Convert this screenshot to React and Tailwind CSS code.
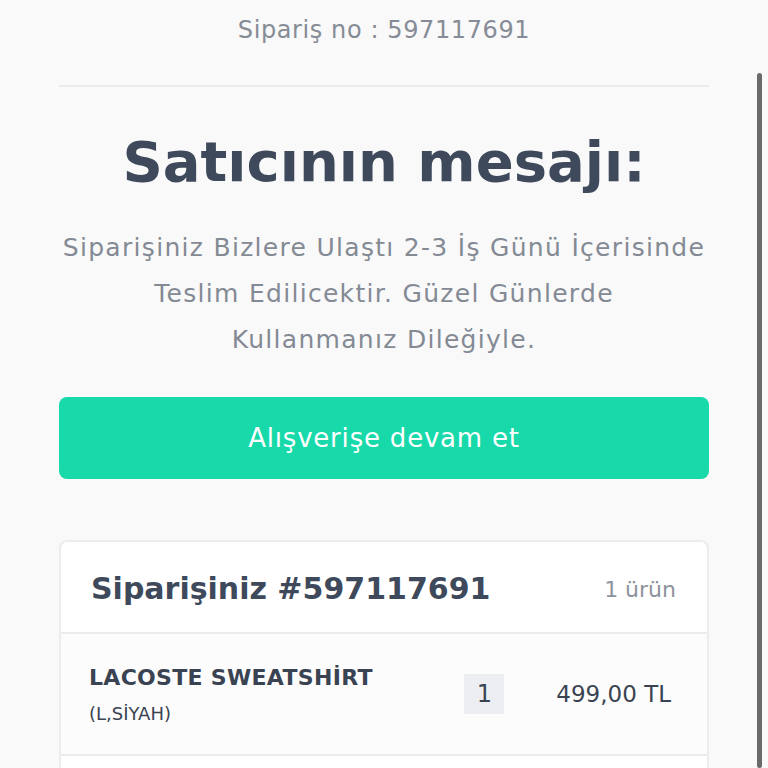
export default function App() {
  return (
    <div
      className="relative min-h-[768px] bg-[#f9f9fa] text-[#3e4a5b]"
      style={{ fontFamily: '"DejaVu Sans", "Open Sans", sans-serif' }}
    >
      <div className="mx-auto w-[650px]">
        <div className="flex h-[60px] items-center justify-center text-[24px] tracking-[0.6px] text-[#868c96]">
          Sipariş no : 597117691
        </div>
        <div className="mt-[25px] border-t-2 border-[#ececee]" />

        <h1 className="mt-[37px] text-center text-[56px] font-bold leading-[76px] text-[#3e4a5b]">
          Satıcının mesajı:
        </h1>

        <p className="mt-[25px] text-center text-[25px] leading-[46px] tracking-[1.3px] text-[#848a94]">
          Siparişiniz Bizlere Ulaştı 2-3 İş Günü İçerisinde
          <br />
          Teslim Edilicektir. Güzel Günlerde
          <br />
          Kullanmanız Dileğiyle.
        </p>

        <button className="mt-[34px] flex h-[82px] w-full items-center justify-center rounded-lg bg-[#17d9a9] text-[26px] tracking-[0.8px] text-white">
          Alışverişe devam et
        </button>

        <div className="mt-[61px] rounded-lg border-2 border-[#ececee] bg-white">
          <div className="flex h-[92px] items-center justify-between border-b-2 border-[#ececee] pl-[30px] pr-[31px]">
            <span className="pt-[2px] text-[30px] font-bold text-[#3e4a5b]">Siparişiniz #597117691</span>
            <span className="pt-[4px] text-[22px] text-[#8d939c]">1 ürün</span>
          </div>
          <div className="flex h-[122px] items-center border-b-2 border-[#ececee] bg-[#fcfcfc] pl-[28px] pr-[36px]">
            <div className="flex-1">
              <div className="text-[22px] font-semibold leading-[32px] tracking-[0.3px] text-[#3a4352]">LACOSTE SWEATSHİRT</div>
              <div className="mt-[6px] text-[18px] text-[#3a4352]">(L,SİYAH)</div>
            </div>
            <div className="flex h-[40px] w-[40px] items-center justify-center bg-[#eceef1] text-[24px] text-[#3a4352]">
              1
            </div>
            <div className="ml-[52px] text-[23px] text-[#3a4352]">499,00 TL</div>
          </div>
          <div className="h-[40px]" />
        </div>
      </div>

      <div className="absolute right-[6px] top-[73px] h-[695px] w-[5px] rounded-full bg-[#6a6a6a]" />
    </div>
  );
}
